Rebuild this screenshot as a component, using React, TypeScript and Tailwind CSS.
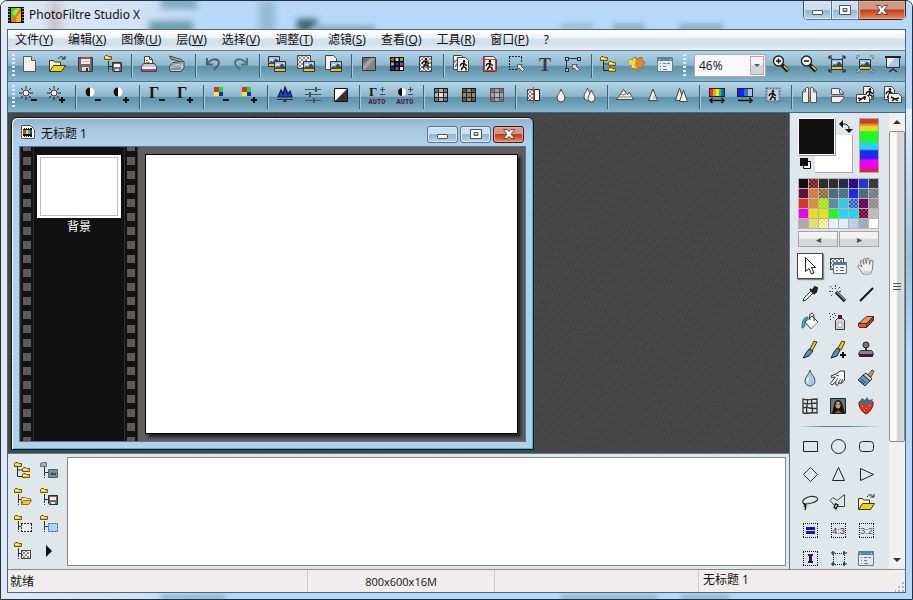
import type { ReactNode } from 'react'

/* ---------- shared icon parts ---------- */

const Pic = ({ x, y }: { x: number; y: number }) => (
    <g transform={`translate(${x} ${y})`}>
        <path d="M.5.5h11v10H.5z" fill="#9fc4ea" stroke="#333" />
        <path d="M2 3h3v1H2zM7 2h3v1H7z" fill="#fff" />
        <path d="M1 7l2-2 2 1 3-4 3 4v2H1z" fill="#3c4a55" />
        <path d="M1 8h10v2H1z" fill="#e3c921" />
    </g>
)

const Man = ({ x, y, color = '#111' }: { x: number; y: number; color?: string }) => (
    <g transform={`translate(${x} ${y})`} fill="none" stroke={color} strokeWidth="1.4">
        <circle cx="5" cy="1.3" r="1.200" fill={color} stroke="none" />
        <path d="M5 2.600L4.400 6.500M4.400 6.500L2 10M4.400 6.500L7 8v2.600M1 6l1-2 3-1 1.500 2L8 5.500" />
    </g>
)

const Folder = ({ x, y }: { x: number; y: number }) => (
    <g transform={`translate(${x} ${y})`}>
        <path d="M.5 4.500v-3l1-1h2l1 1h3v3z" fill="#f2c81b" stroke="#6d5518" />
        <path d="M1 2h4v1H1z" fill="#fff69a" />
    </g>
)

const Floppy = ({ x, y }: { x: number; y: number }) => (
    <g transform={`translate(${x} ${y})`}>
        <path d="M.5.5h9v9h-8l-1-1z" fill="#6b6f73" stroke="#2b2b2b" />
        <path d="M2 1h6v4H2z" fill="#f4f4f4" />
        <path d="M2 1h6v1H2z" fill="#d33f35" />
        <path d="M3 7h4v2H3z" fill="#ddd" />
    </g>
)

const Checker = ({ x, y, w, h }: { x: number; y: number; w: number; h: number }) => (
    <g>
        <rect x={x} y={y} width={w} height={h} fill="#f5f1f2" />
        <path
            d={Array.from({ length: Math.floor(h / 2) }, (_, r) =>
                Array.from({ length: Math.floor(w / 4) }, (_, c) => `M${x + c * 4 + (r % 2) * 2} ${y + r * 2}h2v2h-2z`).join(''),
            ).join('')}
            fill="#8e8589"
        />
        <rect x={x + 0.5} y={y + 0.5} width={w - 1} height={h - 1} fill="none" stroke="#444" />
    </g>
)

const Minus = () => <path d="M12 14h6v2h-6z" fill="#111" />
const Plus = () => <path d="M12 14h2v-2h2v2h2v2h-2v2h-2v-2h-2z" fill="#111" />
const Cursor = ({ x, y }: { x: number; y: number }) => (
    <path transform={`translate(${x} ${y})`} d="M.5.5h5L4 2l3.500 3.500-2 2L2 4 .5 5.500z" fill="#dcdcdc" stroke="#4a4a4a" strokeWidth=".8" />
)

const Sun = () => (
    <g>
        <path d="M7 1v3M7 12v3M0 8h3M11 8h3M2 3l2 2M12 3l-2 2M2 13l2-2M12 13l-2-2" stroke="#222" fill="none" />
        <circle cx="7" cy="8" r="3" fill="#fff" stroke="#333" />
    </g>
)

const Half = () => (
    <g>
        <circle cx="7" cy="7" r="4.500" fill="#fff" />
        <path d="M7 2.500a4.500 4.500 0 0 0 0 9z" fill="#111" />
    </g>
)

const Gamma = ({ x, y, size }: { x: number; y: number; size: number }) => (
    <text x={x} y={y} fontSize={size} fontWeight="700" fontFamily="Liberation Serif, serif" fill="#161616">
        Γ
    </text>
)

const Blocks = () => (
    <g>
        <path d="M3 2h5v5H3z" fill="#d63327" />
        <path d="M8 2h4v5H8z" fill="#18e021" />
        <path d="M3 7h5v4H3z" fill="#f1ee21" />
        <path d="M8 7h4v4H8z" fill="#1522ee" />
    </g>
)

const Auto = () => (
    <g>
        <path d="M13 4.500h5M15.500 2v5M13 9.500h5" stroke="#3c4b55" fill="none" />
        <text x="10" y="19" fontSize="7" textAnchor="middle" fontWeight="700" fontFamily="Liberation Mono, monospace" fill="#5c1030">
            AUTO
        </text>
    </g>
)

const Grid3 = ({ a, b, corner = '#5a585c', frame = '#1b1b1b' }: { a: string; b: string; corner?: string; frame?: string }) => (
    <g>
        <path d="M3 3h14v14H3z" fill={frame} />
        <path d="M4 4h3v3H4zM13 4h3v3h-3zM4 13h3v3H4zM13 13h3v3h-3z" fill={corner} />
        <path d="M8 4h4v3H8zM4 8h3v4H4zM13 8h3v4h-3zM8 13h4v3H8z" fill={a} />
        <path d="M8 8h4v4H8z" fill={b} />
    </g>
)

const DottedBox = () => <path d="M3 3.500h15M3 17.500h15M3.500 4v13M17.500 4v13" fill="none" stroke="#111" strokeDasharray="1 1" />

const Tree = () => <path d="M5.500 7v11M6 12.500h4" stroke="#333" fill="none" strokeDasharray="9 1" />
const Page = ({ x, y, w = 12, h = 15 }: { x: number; y: number; w?: number; h?: number }) => (
    <path d={`M${x + 0.5} ${y + 0.5}h${w - 4}l3 3v${h - 4}h-${w - 1}z`} fill="#f4f3f2" stroke="#444" />
)

const OpenFolder = () => (
    <g>
        <path d="M2.500 17V6.500h4l1 1.500h6v3" fill="#fdf8b5" stroke="#333" />
        <path d="M2.500 17.500l4-6h12l-4 6z" fill="#ecd414" stroke="#333" />
        <path d="M11 5c2-3 5-3 6 0M14.500 5H18V2" fill="none" stroke="#222" />
    </g>
)

const WindowShape = () => (
    <g>
        <path d="M2.500 3.500h15v14h-15z" fill="#e4ebee" stroke="#5f7c8c" />
        <path d="M3 4h14v3H3z" fill="#5a89a3" />
        <path d="M4 5h1v1H4zM15 5h1v1h-1z" fill="#cde" />
        <path d="M5 9h1v1H5zM8 9h3v1H8zM12 9h3v1h-3zM5 12h1v1H5zM8 12h3v1H8zM5 15h1v1H5zM8 15h4v1H8z" fill="#777" />
    </g>
)

const Magnifier = ({ plus }: { plus?: boolean }) => (
    <g>
        <path d="M11 11l6 6" stroke="#1d1d1d" strokeWidth="4" />
        <path d="M13 12l4 4" stroke="#f0d23a" strokeWidth="1.500" />
        <circle cx="7.500" cy="7" r="5" fill="#f2f6f7" stroke="#222" strokeWidth="1.400" />
        <path d={plus ? 'M5 7h5M7.500 4.500v5' : 'M5 7h5'} stroke="#111" strokeWidth="1.500" />
    </g>
)

/* ---------- icons, all on a 20 x 20 grid ---------- */

const icons: Record<string, ReactNode> = {
    new: <g><path d="M4.500 2.500h8l4 4v11h-12z" fill="#f3f1ee" stroke="#555" /><path d="M12.500 2.500v4h4" fill="#ccc" stroke="#555" /></g>,
    open: <OpenFolder />,
    save: (
        <g>
            <path d="M3.500 3.500h14v14h-13l-1-1z" fill="#6e6967" stroke="#393737" />
            <path d="M6 4h9v6H6z" fill="#f3f0f0" /><path d="M6 3h9v2H6z" fill="#d64136" />
            <path d="M7 7h7v1H7z" fill="#bbb" /><path d="M7 13h7v4H7z" fill="#d9d9d9" /><path d="M11 14h2v3h-2z" fill="#333" />
        </g>
    ),
    explorerSave: <g><Folder x={1} y={1} /><Tree /><Floppy x={9} y={8} /></g>,
    print: (
        <g>
            <path d="M5.500 11V2.500h5l3 3V11" fill="#fff" stroke="#444" /><path d="M10.500 2.500v3h3" fill="none" stroke="#444" />
            <path d="M7 6h2v1H7zM7 8h4v1H7z" fill="#c66" />
            <path d="M2.500 12.500l2-3h11l2 3v5h-15z" fill="#c9c1c8" stroke="#4e3b4d" /><path d="M3 13h14v2H3z" fill="#f3eef2" /><path d="M3 15h14v2H3z" fill="#8a5a82" />
        </g>
    ),
    scan: (
        <g>
            <path d="M2.500 2l12 3.500 2 3L4 5z" fill="#a9abad" stroke="#444" />
            <path d="M2.500 12L6 8.500l11-1v6L14 17.500H3z" fill="#c3ced3" stroke="#3c4448" />
            <path d="M6 10l9-1-2 3H4z" fill="#aee0ee" stroke="#60757d" strokeWidth=".7" /><path d="M3 14l11-1v3H3z" fill="#7b939c" />
        </g>
    ),
    undo: <path d="M4 4v6.500h6M4.500 10C7 5 15.500 3 16 9c0 3-3.500 4-5 7" fill="none" stroke="#4d5f6c" strokeWidth="2" />,
    redo: <path d="M16 4v6.500h-6M15.500 10C13 5 4.500 3 4 9c0 3 3.500 4 5 7" fill="none" stroke="#56707e" strokeWidth="2" />,
    pics: <g><Pic x={1} y={2} /><Pic x={7} y={7} /></g>,
    picChecker: <g><Checker x={2} y={1} w={14} h={14} /><Pic x={8} y={7} /></g>,
    picPage: <g><Page x={2} y={1} /><Pic x={7} y={7} /></g>,
    shade: <g><path d="M3.500 3.500h13v13h-13z" fill="#858287" stroke="#333" /><path d="M4 12L12 4h4v1L5 16H4z" fill="#a3a1a5" /><path d="M4 4h6l-6 6z" fill="#6d696f" /></g>,
    colors: (
        <g>
            <path d="M3 3h14v14H3z" fill="#080808" />
            <path d="M4 4h3v3H4z" fill="#e5402d" /><path d="M8.500 4h3v3h-3z" fill="#e9e51a" /><path d="M13 4h3v3h-3z" fill="#25e22c" />
            <path d="M4 8.500h3v3H4z" fill="#28d8e8" /><path d="M8.500 8.500h3v3h-3z" fill="#1c2cf0" /><path d="M13 8.500h3v3h-3z" fill="#ee10e0" />
            <path d="M4 13h3v3H4z" fill="#5e1150" /><path d="M8.500 13h3v3h-3z" fill="#666" /><path d="M13 13h3v3h-3z" fill="#eee" />
        </g>
    ),
    manChecker: <g><Checker x={4} y={2} w={13} h={16} /><Man x={6} y={4} /></g>,
    duplicate: <g><Page x={2} y={1} /><Man x={2} y={3} color="#777" /><Page x={6} y={3} /><Man x={8} y={6} /></g>,
    crop: <g><Page x={4} y={2} w={14} h={16} /><Man x={6} y={6} /><path d="M3 5.500h13.500V18M5.500 3v13.500H18" fill="none" stroke="#e0392b" strokeWidth="1.200" /></g>,
    select: <g><path d="M2 2.500h13M2 15.500h8M2.500 3v12M14.500 3v6" fill="none" stroke="#222" strokeDasharray="2 1" /><Cursor x={10} y={10} /></g>,
    text: <text x="10" y="17" textAnchor="middle" fontSize="18" fontWeight="700" fontFamily="Liberation Serif, serif" fill="#3c3c40">T</text>,
    path: <g><path d="M3.500 17V4.500H15" fill="none" stroke="#333" /><path d="M2 3h4v4H2zM14 3h4v4h-4zM2 14h4v4H2z" fill="#333" /><path d="M3 4h2v2H3zM15 4h2v2h-2zM3 15h2v2H3z" fill="#b8c4cb" /><Cursor x={9} y={10} /></g>,
    tree: <g><path d="M4.500 7v9.500H11M4.500 10H10" fill="none" stroke="#222" /><Folder x={1} y={2} /><Folder x={9} y={7} /><Folder x={9} y={13} /></g>,
    puzzle: (
        <g>
            <path d="M2 6h4V4l2-1 2 1v2l2-2 3-1v3l3 2-2 3-1 3h-3l-2 3-3-3H4l1-4-3-1z" fill="#d98a36" stroke="#a36227" strokeWidth=".8" />
            <path d="M2 6h4V4l3 1-1 5 1 4H4l1-3-3-1z" fill="#f2d83a" /><path d="M3 7h1v1H3zM6 9h1v1H6zM5 12h1v1H5z" fill="#fffbc0" />
        </g>
    ),
    window: <WindowShape />,
    zoomIn: <Magnifier plus />,
    zoomOut: <Magnifier />,
    fit: <g><Pic x={4} y={5} /><path d="M2 2l3 3M18 2l-3 3M2 18l3-3M18 18l-3-3M2 2h3M2 2v3M18 2h-3M18 2v3M2 18h3M2 18v-3M18 18h-3M18 18v-3" stroke="#3a3335" fill="none" strokeWidth="1.200" /></g>,
    actual: <g><Pic x={4} y={5} /><path d="M2 5V2h3M15 2h3v3M2 15v3h3M15 18h3v-3" stroke="#5b6a72" fill="none" strokeWidth="1.200" /><path d="M2 2l3 3M18 2l-3 3M2 18l3-3M18 18l-3-3" stroke="#b9c9d1" /></g>,
    screen: <g><path d="M10 13v3M6 18l4-3 4 3" stroke="#222" fill="none" strokeWidth="1.300" /><path d="M3.500 3.500h13v10h-13z" fill="#a9c9e9" stroke="#333" /><path d="M2 3h16" stroke="#222" strokeWidth="2" /><path d="M4 4h8l-7 8H4z" fill="#e2effa" /></g>,

    sunMinus: <g><Sun /><Minus /></g>,
    sunPlus: <g><Sun /><Plus /></g>,
    halfMinus: <g><Half /><Minus /></g>,
    halfPlus: <g><Half /><Plus /></g>,
    gammaMinus: <g><Gamma x={2} y={13} size={16} /><Minus /></g>,
    gammaPlus: <g><Gamma x={2} y={13} size={16} /><Plus /></g>,
    blocksMinus: <g><Blocks /><Minus /></g>,
    blocksPlus: <g><Blocks /><Plus /></g>,
    histogram: <g><path d="M3 12l3-7 2 4 2-7 3 7 2-3 2 6z" fill="#1c3fe0" stroke="#1a1d33" strokeWidth="1.200" /><path d="M2 14.500h16" stroke="#333" /><path d="M10 13l2 4H8z" fill="#333" /></g>,
    sliders: <g stroke="#455560"><path d="M2 4.500h16M2 9.500h16M2 15.500h16" fill="none" /><path d="M13 2v5M7 7v5M11 13v5" strokeWidth="2" /></g>,
    diagonal: <g><path d="M3.500 3.500h13v13h-13z" fill="#fff" stroke="#111" /><path d="M16 4v12H4z" fill="#333" /></g>,
    gammaAuto: <g><Gamma x={2} y={11} size={13} /><Auto /></g>,
    halfAuto: <g><circle cx="7" cy="7" r="4" fill="#fff" /><path d="M7 3a4 4 0 0 0 0 8z" fill="#111" /><Auto /></g>,
    grid1: <Grid3 a="#bbb3b5" b="#e8e4e5" corner="#77757a" />,
    grid2: <Grid3 a="#a48656" b="#85838a" />,
    grid3: <Grid3 a="#aaa0a4" b="#9fc3d5" corner="#77757a" frame="#545358" />,
    mask: <g><path d="M4.500 4.500h12v11h-12z" fill="#fff" stroke="#222" /><Checker x={4} y={4} w={8} h={12} /><path d="M10.500 2v17" stroke="#e2392b" /></g>,
    blur: <path d="M10 4c1 4 4 5 4 9a4 4 0 0 1-8 0c0-4 3-5 4-9z" fill="#f2f4f4" stroke="#444" />,
    blurMore: <g fill="#f2f4f4" stroke="#444"><path d="M8.500 3c1 4 3.500 5 3.500 9a3.500 3.500 0 0 1-7 0c0-4 2.500-5 3.500-9z" /><path d="M12.500 5c1 4 3.500 5 3.500 8.500a3.500 3.500 0 0 1-7 0c0-3.500 2.500-4.500 3.500-8.500z" /></g>,
    relief: <g fill="#f0eeee" stroke="#444"><path d="M1.500 14.500l7-10 4 5 2-2 4 7z" /><path d="M5 9l3 1 3-1M4 12h12" fill="none" stroke="#777" /></g>,
    sharpen: <g><path d="M10 4l4.500 11.500h-9z" fill="#f2f2f2" stroke="#444" /><path d="M11 8l2 6h-3z" fill="#bbb" /></g>,
    sharpenMore: <g fill="#f2f2f2" stroke="#444"><path d="M8.500 3l4 12.500h-8z" /><path d="M12.500 5l4 11.500h-8z" /></g>,
    hue: (
        <g>
            <path d="M2 3h16v9H2z" fill="#222" /><path d="M3 4h3v7H3z" fill="#e6352b" /><path d="M6 4h3v7H6z" fill="#f3a21a" />
            <path d="M9 4h3v7H9z" fill="#f2f01c" /><path d="M12 4h2v7h-2z" fill="#1fdc2c" /><path d="M14 4h3v7h-3z" fill="#1c5af0" />
            <path d="M3 15.500h14M5.500 13L3 15.500 5.500 18M14.500 13l2.500 2.500-2.500 2.500" fill="none" stroke="#111" strokeWidth="1.400" />
        </g>
    ),
    saturation: (
        <g>
            <path d="M2 3h16v9H2z" fill="#222" /><path d="M3 4h6v7H3z" fill="#1620ea" /><path d="M9 4h4v7H9z" fill="#3c66dc" /><path d="M13 4h4v7h-4z" fill="#a5c0dc" />
            <path d="M3 15.500h14M14.500 13l2.500 2.500-2.500 2.500" fill="none" stroke="#111" strokeWidth="1.400" />
        </g>
    ),
    stampMan: <g><path d="M3.500 3.500h13v13h-13z" fill="#bcd3de" stroke="#617782" strokeDasharray="2 1" strokeWidth="2" /><Man x={5} y={5} /></g>,
    flipH: <g fill="#f0eeee" stroke="#555"><path d="M9.500 17.500h-6v-11l4-4h2zM11.500 17.500h6v-11l-4-4h-2z" /><path d="M6.500 3v4h-3M14.500 3v4h3" fill="none" /></g>,
    flipV: <g fill="#f0eeee" stroke="#555"><path d="M4.500 9.500v-6h8l4 4v2zM4.500 11.500v6h8l4-4v-2z" /><path d="M12.500 4v4h4" fill="none" /></g>,
    rotateL: <g><Page x={8} y={1} w={11} h={14} /><Man x={10} y={3} /><path d="M1.500 9.500h10l3 3v5h-13z" fill="#f4f3f2" stroke="#444" /><path d="M3 13l3 1 5-2M6 14l-2 2M9 11l1 4" stroke="#111" strokeWidth="1.400" fill="none" /></g>,
    rotateR: <g><Page x={1} y={1} w={11} h={14} /><Man x={2} y={3} /><path d="M5.500 8.500h10l3 3v6h-13z" fill="#f4f3f2" stroke="#444" /><path d="M8 12l4 2 4-1M12 14l3 2M9 16l2-2" stroke="#111" strokeWidth="1.400" fill="none" /></g>,

    arrow: <path d="M5.500 1.500v14l3.500-3 2.500 5.500 2.500-1-2.500-5.500h4z" fill="#fff" stroke="#222" />,
    layer: <g><Checker x={2} y={2} w={14} h={12} /><path d="M5.500 6.500h13v11h-13z" fill="#f4f4f4" stroke="#4e7386" /><path d="M6 7h12v2H6z" fill="#4e7c99" /><path d="M8 11h2v1H8zM12 11h4v1h-4zM8 14h2v1H8zM12 14h4v1h-4z" fill="#666" /></g>,
    hand: <g><path d="M7 18L3.500 13 1.500 10l1.500-1 3 2-2-6 1.500-1 2.500 4.500L7.500 3 9 2l1.500 6 .5-6 2 .3.5 6.200L15 4l2 .8-.3 6.200c0 4-1.700 4.500-2.200 7z" fill="#efefee" stroke="#7d7d7d" /><path d="M8 15h6v3H8z" fill="#cfcfcf" /></g>,
    dropper: <g><path d="M3 17l1-3 7-7 2 2-7 7z" fill="#f3f3f3" stroke="#333" /><path d="M10 5l5 5M12 7l3-4 2 1-1 4-3 1z" stroke="#222" fill="#3a1430" strokeWidth="2" /></g>,
    wand: <g><path d="M8 8l9 9" stroke="#222" strokeWidth="3.500" /><path d="M9 8l8 8" stroke="#6f8ea3" strokeWidth="1.200" /><path d="M7.500 1v4M1 7.500h4M2 2l3 3M12 3l-2 2M3 12l2-2M11 7.500h3" stroke="#345" strokeDasharray="2 1" /></g>,
    line: <path d="M4 17L17 4" stroke="#111" strokeWidth="2" />,
    bucket: <g><path d="M5 10l7-6 6 6-7 7z" fill="#fff" stroke="#333" /><path d="M10 8c-2-7 3-9 4-4v5" fill="none" stroke="#333" /><path d="M10 16l7-6 1 1-6 6z" fill="#bbb" /><path d="M8 5C4 5 2 8 2 16c2 0 3-1 3-6z" fill="#28b8dc" stroke="#2c5666" strokeWidth=".8" /></g>,
    spray: <g><path d="M7.500 8.500l2-2h5l2 2v9h-9z" fill="#d4d7d7" stroke="#333" /><path d="M10 3h4v3h-4z" fill="#4c1747" /><path d="M10 11h4v4h-4z" fill="#f4f7f8" stroke="#889" strokeWidth=".6" /><path d="M1 1h1v1H1zM4 2h1v1H4zM7 3h1v1H7zM2 4h1v1H2zM5 5h1v1H5zM2 7h1v1H2zM6 1h1v1H6z" fill="#222" /></g>,
    eraser: <g><path d="M2.500 11.500l8-7h7l-7 7z" fill="#ea9468" stroke="#432" /><path d="M2.500 11.500v3l1 1h7v-4z" fill="#da5a3c" stroke="#432" /><path d="M10.500 15.500l7-7v-4l-7 7z" fill="#a6372c" stroke="#432" /></g>,
    brush: <g><path d="M10 9l4-8 3 1-5 9z" fill="#f0ca23" stroke="#332" /><path d="M9 9l4 2-4 5-6 2 3-5z" fill="#5f8fac" stroke="#223" /></g>,
    brushPlus: <g><path d="M10 8l4-7 3 1-4 8z" fill="#f0ca23" stroke="#332" /><path d="M9 8l3 2-3 6-6 2 3-6z" fill="#5f8fac" stroke="#223" /><path d="M12 14h2v-2h2v2h2v2h-2v2h-2v-2h-2z" fill="#111" /></g>,
    stamp: <g><circle cx="10" cy="5" r="3" fill="#777" stroke="#222" /><path d="M9 8h2v3H9z" fill="#333" /><path d="M3.500 11.500l1-1h11l1 1 1 3h-15z" fill="#898487" stroke="#333" /><path d="M3 14h14v3H3z" fill="#4d1147" /></g>,
    drop: <g><path d="M10 2c1 5 5 6 5 11a5 5 0 0 1-10 0c0-5 4-6 5-11z" fill="#a9c9e6" stroke="#405867" /><path d="M8 9c-2 3-2 5 0 7 1 0 0-4 1-7z" fill="#eef7fd" /></g>,
    finger: <g><path d="M16.500 3v9l-3 3.500-3-.5-1 2.500-2-1 .5-3-4 3.500-1.500-1.500 5-6.500-4 .5L3 8l6-2.500 3-2.500z" fill="#fafafa" stroke="#333" /><path d="M8 13l2-3M10.500 15l2-4M13.500 15l1-4M8 7l3 1" fill="none" stroke="#444" /></g>,
    flatBrush: <g><path d="M12 7l4-5 2 1-3 6z" fill="#d3a24d" stroke="#543" /><path d="M10 5l6 6-2 2-7-6z" fill="#c9cacc" stroke="#334" /><path d="M7 7l7 6-5 5-7-6z" fill="#6797bb" stroke="#334" /><path d="M5 11l5 4M4 13l4 3" stroke="#29435a" fill="none" /></g>,
    warp: <path d="M3 3c5 2 9 0 14 0v14c-5-1-9 1-14 0zM3 7c5 2 9 0 14 0M3 12c5-2 9 2 14 0M7 3c2 5-2 9 0 14M12 3c-2 5 2 9 0 14" fill="none" stroke="#333" strokeWidth="1.300" />,
    portrait: <g><path d="M2.500 2.500h15v15h-15z" fill="#607a82" stroke="#222" /><path d="M4 17c2-3 1-13 6-13s5 9 7 13z" fill="#18110f" /><ellipse cx="10" cy="9" rx="2.500" ry="3.500" fill="#cd9961" /><path d="M7 17l3-3 4 3z" fill="#8d5d36" /><path d="M8 8h1M11 8h1" stroke="#322" /></g>,
    berry: <g><path d="M3 6c4-2 10-2 14 0 1 5-4 11-7 12-3-1-8-7-7-12z" fill="#df3023" stroke="#831a14" /><path d="M3 6l3-4 3 2 2-3 2 3 4-1-2 5-3-1-2 3-3-3-2 2z" fill="#41707c" /><path d="M6 10h1v1H6zM10 12h1v1h-1zM13 9h1v1h-1zM8 14h1v1H8z" fill="#ffd25c" /></g>,

    rect: <path d="M3.500 5.500h14v10h-14z" fill="none" stroke="#222" />,
    circle: <circle cx="10.500" cy="10.500" r="7" fill="none" stroke="#222" />,
    roundRect: <rect x="3.500" y="5.500" width="14" height="10" rx="3" fill="none" stroke="#222" />,
    diamond: <path d="M10.500 3.500l7 7-7 7-7-7z" fill="none" stroke="#333" />,
    triangle: <path d="M10.500 3.500l6 13h-12z" fill="none" stroke="#222" />,
    triangleRight: <path d="M4.500 4.500l13 6-13 6z" fill="none" stroke="#222" />,
    lasso: <g><path d="M5 13C0 9 4 6 10 4.500c6-1 9 2 7 4S9 12 5 12" fill="none" stroke="#333" strokeWidth="1.200" /><path d="M4 11l2 3-1 4M6 12l-2 3" stroke="#111" fill="none" strokeWidth="1.300" /></g>,
    polyLasso: <g><path d="M7 14L2 8.500l3-3 4 3 7.500-6v12H9" fill="none" stroke="#444" /><path d="M8 11l-2 4 2 2 2-4-2-1" fill="none" stroke="#111" strokeWidth="1.300" /></g>,
    ratioEq: <g><DottedBox /><path d="M6 7h9v3H6zM6 11h9v3H6z" fill="#1a12bd" /></g>,
    ratio43: <g><DottedBox /><text x="10.500" y="14" textAnchor="middle" fontSize="9" fontFamily="Liberation Sans, sans-serif" fill="#4c1747">4:3</text></g>,
    ratio32: <g><DottedBox /><text x="10.500" y="14" textAnchor="middle" fontSize="9" fontFamily="Liberation Sans, sans-serif" fill="#405b70">3:2</text></g>,
    ratioI: <g><DottedBox /><path d="M8 6h5v2h-1v5h1v2H8v-2h1V8H8z" fill="#35105e" /></g>,
    transform: <g><path d="M7 5.500h9M7 16.500h9M5.500 7v9M16.500 7v9" fill="none" stroke="#222" strokeDasharray="1 1" /><path d="M3 5h4M5 3v4M15 5h4M16 3v4M3 16h4M5 14v4M15 16h4M16 14v4" stroke="#222" strokeWidth="1.200" /></g>,

    treeGrey: <g><path d="M1.500 6.500v-3l2-1h4v4z" fill="#a6adb1" stroke="#657077" /><Tree /><path d="M9.500 9.500h9v8h-9z" fill="#7b929d" stroke="#4f616a" /><path d="M11 15l2-3 2 2 2-2v3z" fill="#34454f" /></g>,
    treeOpen: <g><Folder x={1} y={1} /><Tree /><path d="M8.500 17.500v-7h4l1 1h4v2" fill="#fbe9a8" stroke="#ae6a17" /><path d="M8.500 17.500l2-4h8l-3 4z" fill="#f3c62b" stroke="#ae6a17" /></g>,
    treeSelect: <g><Folder x={1} y={1} /><Tree /><path d="M8 9h11v9H8z" fill="#eceff0" /><path d="M8 9.500h11M8 17.500h11M8.500 10v7M18.500 10v7" fill="none" stroke="#222" strokeDasharray="2 1" /></g>,
    treeShape: <g><Folder x={1} y={1} /><Tree /><path d="M9.500 9.500h9v8h-9z" fill="#b3d2ee" stroke="#33617b" strokeDasharray="2 1" /></g>,
    treeChecker: <g><Folder x={1} y={1} /><Tree /><Checker x={8} y={9} w={10} h={9} /></g>,
    play: <path d="M7 4l6 6-6 6z" fill="#111" />,
}

const Icon = ({ name }: { name: string }) => (
    <svg viewBox="0 0 20 20" className="block size-5 overflow-visible" aria-hidden="true">
        {icons[name]}
    </svg>
)

/* ---------- data ---------- */

const menus = [
    ['文件', 'Y'], ['编辑', 'X'], ['图像', 'U'], ['层', 'W'], ['选择', 'V'],
    ['调整', 'T'], ['滤镜', 'S'], ['查看', 'Q'], ['工具', 'R'], ['窗口', 'P'],
]

const mainTools = [
    ['new', 'open', 'save', 'explorerSave'],
    ['print', 'scan'],
    ['undo', 'redo'],
    ['pics', 'picChecker', 'picPage'],
    ['shade', 'colors', 'manChecker'],
    ['duplicate', 'crop', 'select', 'text', 'path'],
    ['tree', 'puzzle', 'window'],
]

const zoomTools = [['zoomIn', 'zoomOut', 'fit', 'actual', 'screen']]

const filterTools = [
    ['sunMinus', 'sunPlus'],
    ['halfMinus', 'halfPlus'],
    ['gammaMinus', 'gammaPlus'],
    ['blocksMinus', 'blocksPlus'],
    ['histogram', 'sliders', 'diagonal'],
    ['gammaAuto', 'halfAuto'],
    ['grid1', 'grid2', 'grid3'],
    ['mask', 'blur', 'blurMore'],
    ['relief', 'sharpen', 'sharpenMore'],
    ['hue', 'saturation', 'stampMan'],
    ['flipH', 'flipV', 'rotateL', 'rotateR'],
]

const paintTools = [
    'arrow', 'layer', 'hand', 'dropper', 'wand', 'line', 'bucket', 'spray', 'eraser',
    'brush', 'brushPlus', 'stamp', 'drop', 'finger', 'flatBrush', 'warp', 'portrait', 'berry',
]

const shapeTools = [
    'rect', 'circle', 'roundRect', 'diamond', 'triangle', 'triangleRight', 'lasso', 'polyLasso',
    'open', 'ratioEq', 'ratio43', 'ratio32', 'ratioI', 'transform', 'window',
]

const explorerTools = ['tree', 'treeGrey', 'treeOpen', 'explorerSave', 'treeSelect', 'treeShape', 'treeChecker', 'play']

// pairs of colours, the second one is dithered over the first
const palette = [
    ['#101010', '#101010'], ['#d33a2a', '#3a2a2c'], ['#2a2f30', '#2a2f30'], ['#2a2f30', '#2a2f30'], ['#222c35', '#2a2f60'], ['#2018d0', '#300838'], ['#1f2af0', '#3440a0'], ['#303232', '#444646'],
    ['#4d0a4d', '#80123f'], ['#d96a30', '#cf9048'], ['#d08a3a', '#66665a'], ['#4f6b7d', '#4f6b7d'], ['#4f6b7d', '#4a8090'], ['#1f2af0', '#1f2af0'], ['#4f6b7d', '#4f6b7d'], ['#8b9094', '#5f7886'],
    ['#d33a2a', '#d33a2a'], ['#d68f45', '#d68f45'], ['#e0e020', '#78f020'], ['#5f8aa0', '#5f8aa0'], ['#22d3ee', '#38c8e0'], ['#2350e0', '#70a0c0'], ['#4d0a4d', '#900a80'], ['#a09c9f', '#8b878a'],
    ['#f000f0', '#f000f0'], ['#e2e020', '#e2e020'], ['#e2e020', '#e2e020'], ['#20f828', '#20f828'], ['#28d4ec', '#28d4ec'], ['#28d4ec', '#28d4ec'], ['#c52a32', '#351055'], ['#bdbdbd', '#bdbdbd'],
    ['#b3a5aa', '#b3a5aa'], ['#e8e64a', '#d8d8a0'], ['#fff', '#eeee30'], ['#f2f6f8', '#dfeaf2'], ['#e6f2fa', '#d4eafa'], ['#a9cdea', '#bcd7ee'], ['#b3a5aa', '#8eb3ca'], ['#fff', '#fff'],
]

/* ---------- components ---------- */

function ToolGroups({ groups }: { groups: string[][] }) {
    return (
        <div className="flex shrink-0">
            {groups.map((group, i) => (
                <div key={i} className="flex">
                    {i > 0 && (
                        <span className="flex w-2 justify-center">
                            <span className="h-6 w-px bg-[#3f6072] shadow-[1px_0_0_#a8cbdc]" />
                        </span>
                    )}
                    {group.map((name) => (
                        <button key={name} type="button" aria-label={name} className="flex h-6 w-7 justify-center">
                            <Icon name={name} />
                        </button>
                    ))}
                </div>
            ))}
        </div>
    )
}

const Grip = () => (
    <span className="ml-1 h-6 w-[3px] shrink-0 bg-[repeating-linear-gradient(180deg,#dcebf3_0_2px,transparent_2px_4px)]" />
)

const toolbarClass =
    'flex overflow-hidden pt-[3px] bg-[linear-gradient(180deg,#b5d3e6_0%,#a5c8dc_20%,#8bb5cb_48%,#5e92a9_50%,#6b9db3_70%,#86b6ce_100%)]'

function WindowButtons({ child }: { child?: boolean }) {
    const size = child ? 'w-[31px] rounded-[3px] border h-[17px]' : 'h-[19px] border-r border-b'
    const plain = 'bg-[linear-gradient(180deg,#cbdff0_0_48%,#92b5cd_50%,#b9d4e8_100%)] border-[#54748a]'
    const close = 'bg-[linear-gradient(180deg,#cf9a80_0_45%,#c73520_50%,#df9350_100%)] border-[#481331]'
    return (
        <div className={child ? 'flex gap-[2px]' : 'flex overflow-hidden rounded-b-[5px] border-l border-[#3b4a56]'}>
            <button type="button" aria-label="最小化" className={`flex items-center justify-center shadow-[inset_0_0_0_1px_#dcebf7] ${size} ${plain} ${child ? '' : 'w-7'}`}>
                <span className="mt-1 h-[5px] w-[11px] rounded-[1px] border border-[#555] bg-white" />
            </button>
            <button type="button" aria-label="最大化" className={`flex items-center justify-center shadow-[inset_0_0_0_1px_#dcebf7] ${size} ${plain} ${child ? '' : 'w-[27px]'}`}>
                <svg viewBox="0 0 12 10" className="h-[10px] w-3">
                    <path d="M.5.5h11v9H.5zM4 3.500v3h4v-3z" fill="#fff" fillRule="evenodd" stroke="#4c535a" />
                </svg>
            </button>
            <button type="button" aria-label="关闭" className={`flex items-center justify-center shadow-[inset_0_0_0_1px_#dfac8c] ${size} ${close} ${child ? '' : 'w-[47px]'}`}>
                <svg viewBox="0 0 12 10" className="h-[10px] w-3">
                    <path d="M.5.5H4l2 2.200L8 .5h3.500L8 5l3.500 4.500H8L6 7.300 4 9.500H.5L4 5z" fill="#fff" stroke="#4c4244" strokeWidth=".9" />
                </svg>
            </button>
        </div>
    )
}

const Film = () => (
    <div className="flex w-[14px] shrink-0 justify-center border-x border-[#303030] bg-[#121212]">
        <span className="w-2 bg-[repeating-linear-gradient(180deg,#5c5b5a_0_4px,#121212_4px_10px,#5c5b5a_10px_14px)]" />
    </div>
)

function DocumentWindow() {
    return (
        <section className="absolute top-1 left-[3px] flex h-[333px] w-[523px] flex-col rounded-t-[6px] border border-[#111] bg-[linear-gradient(180deg,#8fb2cb_0,#a8c8e0_12px,#b4d0e8_28px)] px-[7px] pb-[7px] shadow-[inset_1px_1px_0_#f4f8fb,inset_-1px_-1px_0_#22c7e2]">
            <header className="flex h-7 shrink-0 items-center pl-[2px]">
                <svg viewBox="0 0 14 16" className="h-4 w-[14px]" aria-hidden="true">
                    <path d="M.5 1.500h9l4 4v9H.5z" fill="#fff" stroke="#555" />
                    <path d="M2 4h9v9H2z" fill="#111" />
                    <path d="M2 4h1v1H2zM4 4h1v1H4zM6 4h1v1H6zM8 4h1v1H8zM2 12h1v1H2zM4 12h1v1H4zM6 12h1v1H6zM8 12h1v1H8z" fill="#fff" />
                    <path d="M2 6h3v4H2z" fill="#d63327" /><path d="M5 6h2v4H5z" fill="#eade20" /><path d="M7 6h2v4H7z" fill="#22d536" /><path d="M9 6h2v4H9z" fill="#233af0" />
                </svg>
                <h2 className="ml-[6px] flex-1 pt-1 font-['Noto_Sans','Noto_Sans_CJK_SC',sans-serif] text-xs">无标题 1</h2>
                <div className="mt-1 mr-[2px]">
                    <WindowButtons child />
                </div>
            </header>
            <div className="flex min-h-0 flex-1 border border-[#54788f] bg-[#5f5e5d]">
                <Film />
                <div className="flex w-[90px] shrink-0 flex-col items-center bg-[#111] pt-2">
                    <div className="h-[63px] w-[84px] bg-white px-[3px] py-[2px]">
                        <div className="h-full border border-[#bbb]" />
                    </div>
                    <span className="text-xs leading-[18px] text-white">背景</span>
                </div>
                <Film />
                <div className="m-[7px] flex-1 border border-black bg-white shadow-[3px_3px_3px_#222]" />
            </div>
        </section>
    )
}

function ColorPanel() {
    return (
        <div className="pr-[10px] pl-2">
            <div className="flex h-[55px] justify-between">
                <div className="relative w-[55px]">
                    <button type="button" aria-label="背景色" className="absolute right-0 bottom-0 size-[38px] border-r border-b border-[#aaa] bg-white" />
                    <button type="button" aria-label="前景色" className="absolute top-0 left-0 size-[37px] border border-white bg-[#101010] shadow-[1px_1px_0_#999]" />
                    <svg viewBox="0 0 14 14" className="absolute top-[2px] right-0 size-[14px]" aria-hidden="true">
                        <path d="M3 4h4l3 3v3" fill="none" stroke="#111" />
                        <path d="M0 4l4-4v8zM6 9h8l-4 4z" fill="#111" />
                    </svg>
                    <svg viewBox="0 0 12 12" className="absolute bottom-[3px] left-[2px] size-3" aria-hidden="true">
                        <path d="M3.500 3.500h7v7h-7z" fill="#fff" stroke="#111" /><path d="M0 0h8v8H0z" fill="#111" />
                    </svg>
                </div>
                <div className="w-5 border border-[#b0a5aa] bg-[linear-gradient(180deg,#cf3a28_0_8%,#d68a40_9%_12%,#e2dc1c_13%_22%,#20fa24_24%_42%,#28d3ea_46%_57%,#1f2af0_60%_74%,#ee00ee_78%_93%,#d22b30_95%)]" />
            </div>
            <div className="mt-[5px] grid grid-cols-8 gap-px border border-[#b9b2b5] bg-[#b9b2b5]">
                {palette.map(([a, b], i) => (
                    <button
                        key={i}
                        type="button"
                        aria-label={`颜色 ${i + 1}`}
                        className="h-[9px]"
                        style={{ background: `repeating-conic-gradient(${a} 0 25%, ${b} 0 50%) 0 0 / 4px 4px` }}
                    />
                ))}
            </div>
            <div className="mt-[2px] grid grid-cols-2 gap-px">
                {['◂', '▸'].map((mark) => (
                    <button key={mark} type="button" className="h-[16px] border border-[#aaa0a4] bg-[linear-gradient(180deg,#f3f3f2_45%,#d5d8d8_50%)] text-[10px] leading-[12px] text-[#3c5665]">
                        {mark}
                    </button>
                ))}
            </div>
        </div>
    )
}

function ToolGrid({ names, active }: { names: string[]; active?: string }) {
    return (
        <div className="ml-[6px] grid w-[84px] grid-cols-3">
            {names.map((name) => (
                <button
                    key={name}
                    type="button"
                    aria-label={name}
                    className={`flex items-center justify-center ${name === active ? 'm-px h-[26px] border border-[#444] bg-white shadow-[1px_1px_1px_#888]' : 'h-7'}`}
                >
                    <Icon name={name} />
                </button>
            ))}
        </div>
    )
}

function SidePanel() {
    return (
        <aside className="flex w-[116px] shrink-0 overflow-hidden border-l border-[#54788f] bg-[#e0e7ea]">
            <div className="min-w-0 flex-1 overflow-hidden pt-[5px]">
                <ColorPanel />
                <div className="mt-[5px]">
                    <ToolGrid names={paintTools} active="arrow" />
                </div>
                <div className="mx-2 mt-[6px] mb-[5px] h-px bg-[linear-gradient(90deg,transparent,#4f819a_30%,#4f819a_60%,transparent)]" />
                <ToolGrid names={shapeTools} />
            </div>
            <div className="flex w-4 shrink-0 flex-col bg-[#f1efef]">
                <span className="flex h-[18px] items-center justify-center">
                    <span className="border-x-4 border-b-4 border-x-transparent border-b-[#333]" />
                </span>
                <div className="flex flex-1 flex-col pb-[109px]">
                    <div className="flex flex-1 flex-col items-center justify-center gap-[2px] rounded-[2px] border border-[#8c8c8c] bg-[linear-gradient(90deg,#f8f8f8_45%,#cfd0d0_55%,#dedede)]">
                        <span className="h-px w-2 bg-[#555]" />
                        <span className="h-px w-2 bg-[#555]" />
                        <span className="h-px w-2 bg-[#555]" />
                    </div>
                </div>
                <span className="flex h-[18px] items-center justify-center">
                    <span className="border-x-4 border-t-4 border-x-transparent border-t-[#333]" />
                </span>
            </div>
        </aside>
    )
}

export default function App() {
    return (
        <div className="relative flex h-screen flex-col overflow-hidden rounded-t-[7px] border border-[#26323d] bg-[#b7d8f8] px-[6px] pb-[6px] font-['Open_Sans','Noto_Sans_CJK_SC',sans-serif] text-xs text-[#111]">
            {/* glass frame with blurred shades behind it */}
            <div className="absolute inset-0 overflow-hidden bg-[linear-gradient(90deg,#e0e8f3_0,#d3e3f4_130px,#b7d8f8_210px)]">
                <span className="absolute -top-1 left-40 h-3 w-9 bg-[#80aac2] blur-[3px]" />
                <span className="absolute top-5 left-[148px] h-4 w-11 bg-[#709db2] blur-[3px]" />
                <span className="absolute top-0 left-12 h-9 w-3 bg-[#cdbfc6] blur-[4px]" />
                <span className="absolute top-0 left-[258px] h-8 w-4 bg-[#94bbd6] blur-[3px]" />
                <span className="absolute top-[18px] left-[296px] h-3 w-5 bg-[#43636f] blur-[3px]" />
                <span className="absolute top-6 left-[310px] h-2 w-16 bg-[#8bb2cb] blur-[2px]" />
                <span className="absolute top-[22px] left-[560px] h-2 w-8 bg-[#9bc0db] blur-[2px]" />
                <span className="absolute top-[22px] left-[612px] h-2 w-8 bg-[#8fb7d2] blur-[2px]" />
                <span className="absolute top-[22px] left-[678px] h-2 w-11 bg-[#8fb7d2] blur-[2px]" />
                <span className="absolute bottom-0 left-40 h-1 w-16 bg-[#83aec8] blur-[2px]" />
                <span className="absolute bottom-0 left-[560px] h-1 w-24 bg-[#83aec8] blur-[2px]" />
                <span className="absolute bottom-0 left-[680px] h-1 w-12 bg-[#83aec8] blur-[2px]" />
                <span className="absolute right-0 bottom-0 h-[490px] w-[6px] bg-[linear-gradient(180deg,#e8f1fa,#9cc0dc_30%,#b7d8f8_50%)]" />
            </div>

            <header className="relative flex h-7 shrink-0 items-start">
                <svg viewBox="0 0 16 16" className="mt-[6px] ml-px size-4" aria-hidden="true">
                    <path d="M0 0h16v16H0z" fill="#111" />
                    <path d="M3 1h10v14H3z" fill="#dd7b25" /><path d="M3 1h9l-5 8-4 2z" fill="#2fd43a" /><path d="M4 6l5-5h3L7 9z" fill="#b8df20" /><path d="M9 9l4-4v10H8z" fill="#f2b828" />
                    <path d="M1 1v14M15 1v14" stroke="#fff" strokeDasharray="1 2" />
                </svg>
                <h1 className="ml-[5px] flex-1 pt-[5px] font-['Noto_Sans','Noto_Sans_CJK_SC',sans-serif] text-xs leading-[18px]">PhotoFiltre Studio X</h1>
                <WindowButtons />
            </header>

            <div className="relative flex min-h-0 flex-1 flex-col border border-[#44687d] bg-[#e0e7ea]">
                <nav className="flex h-[21px] shrink-0 items-center gap-[15px] border-b border-[#5b7f93] bg-[linear-gradient(180deg,#fff_0,#f0f1f3_40%,#d3e0ec_45%,#d3e0ec_75%,#f2f2f2_100%)] pl-[7px] font-['Noto_Sans','Noto_Sans_CJK_SC',sans-serif]">
                    {menus.map(([label, key]) => (
                        <button key={key} type="button" className="whitespace-nowrap">
                            {label}(<u className="underline-offset-1">{key}</u>)
                        </button>
                    ))}
                    <button type="button">?</button>
                </nav>

                <div className={`h-[31px] shrink-0 border-b border-[#4d788d] ${toolbarClass}`}>
                    <Grip />
                    <ToolGroups groups={mainTools} />
                    <Grip />
                    <div className="relative mr-px ml-2 h-[23px] w-[72px] shrink-0">
                        <select aria-label="缩放" defaultValue="46%" className="h-full w-full appearance-none border border-[#b5a5ab] bg-[#f6f8fc] pl-1 text-xs outline-none">
                            <option>46%</option>
                            <option>100%</option>
                        </select>
                        <span className="pointer-events-none absolute top-[2px] right-[2px] flex h-[19px] w-[14px] items-center justify-center border border-[#b5a5ab] bg-[linear-gradient(180deg,#f4f4f4_48%,#d3d6d7_50%)]">
                            <span className="border-x-[3px] border-t-[3px] border-x-transparent border-t-[#426579]" />
                        </span>
                    </div>
                    <ToolGroups groups={zoomTools} />
                </div>
                <div className={`h-[30px] shrink-0 ${toolbarClass}`}>
                    <Grip />
                    <ToolGroups groups={filterTools} />
                </div>

                <div className="flex min-h-0 flex-1 border-t border-[#44687d]">
                    <main className="flex min-w-0 flex-1 flex-col">
                        <div className="relative min-h-0 flex-1 overflow-hidden bg-[#464646] bg-[repeating-linear-gradient(155deg,#ffffff08_0_1px,transparent_1px_3px),repeating-linear-gradient(115deg,#00000014_0_1px,transparent_1px_4px)]">
                            <DocumentWindow />
                        </div>
                        <div className="flex h-[116px] shrink-0 border-t border-[#5c7f91] pr-[3px]">
                            <div className="grid w-[59px] shrink-0 grid-cols-2 content-start pt-[2px] pl-[2px] pr-[5px]">
                                {explorerTools.map((name) => (
                                    <button key={name} type="button" aria-label={name} className="flex h-[27px] items-center justify-center">
                                        <Icon name={name} />
                                    </button>
                                ))}
                            </div>
                            <div className="mt-[3px] mb-[3px] flex-1 border border-[#86868b] bg-white" />
                        </div>
                    </main>
                    <SidePanel />
                </div>

                <footer className="flex h-[23px] shrink-0 items-stretch border-t border-[#85898c] bg-[#f1edec] leading-[24px]">
                    <span className="w-[300px] border-r border-[#ccc] pl-[2px]">就绪</span>
                    <span className="w-[187px] border-r border-[#ccc] text-center text-[11px]">800x600x16M</span>
                    <span className="flex-1 border-r border-[#ccc]" />
                    <span className="flex w-[206px] items-end justify-between pl-1">
                        无标题 1
                        <svg viewBox="0 0 10 10" className="size-[10px]" aria-hidden="true">
                            <path d="M7 0h2v2H7zM7 4h2v2H7zM7 8h2v2H7zM3 4h2v2H3zM3 8h2v2H3zM0 8h1v2H0z" fill="#b9b4b4" />
                        </svg>
                    </span>
                </footer>
            </div>
        </div>
    )
}
